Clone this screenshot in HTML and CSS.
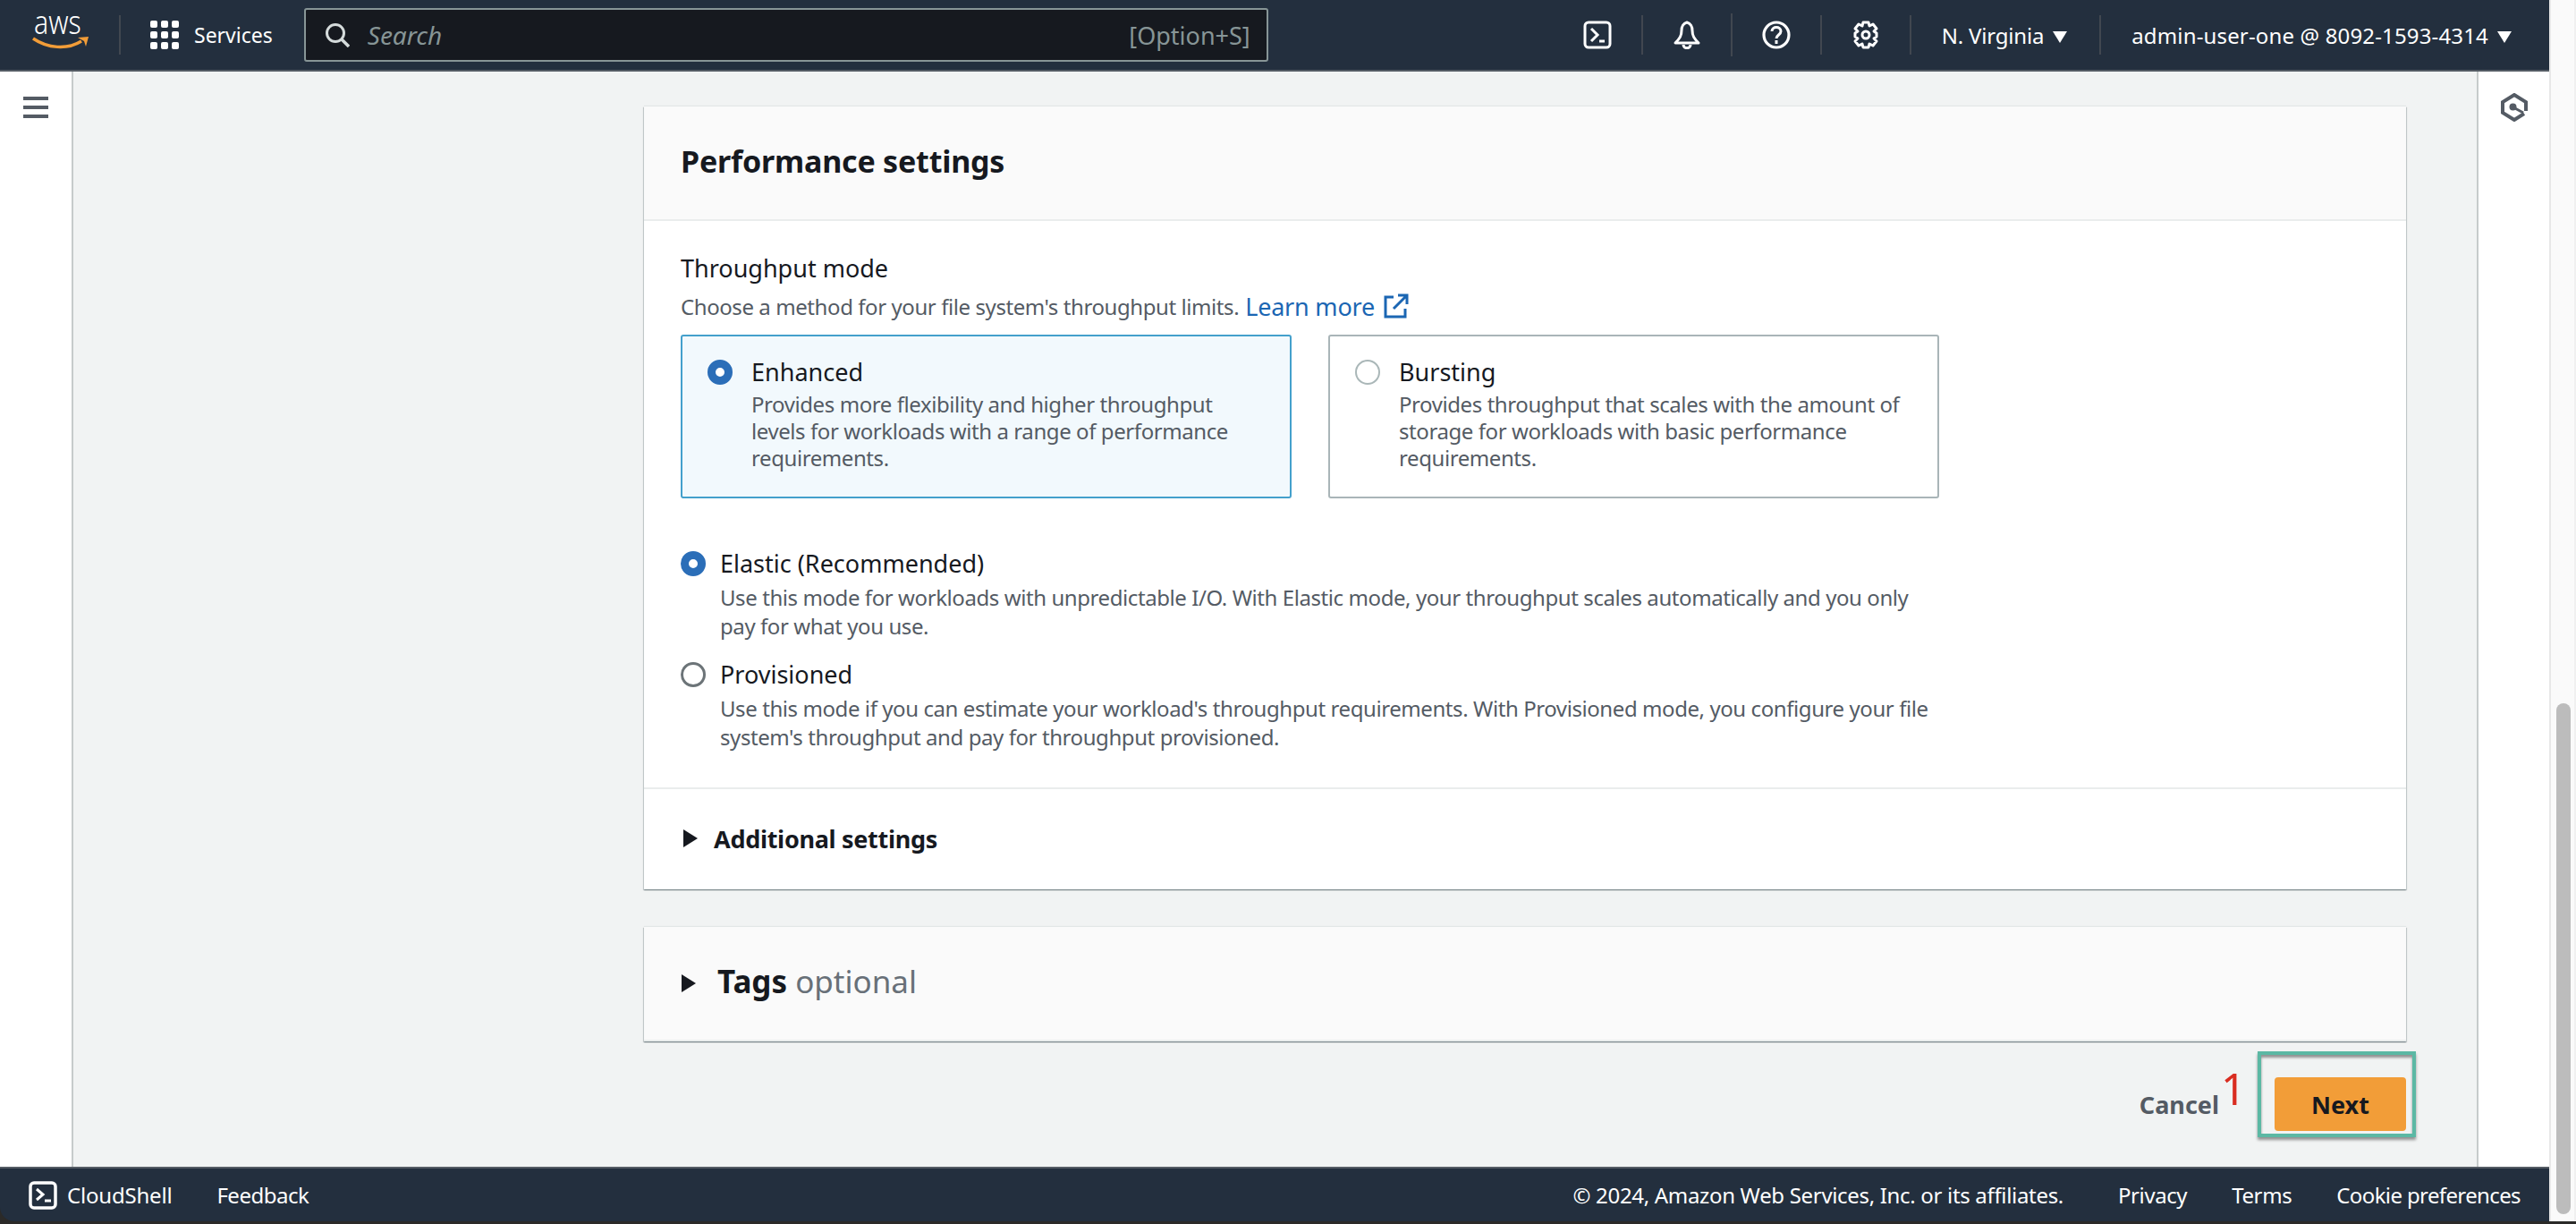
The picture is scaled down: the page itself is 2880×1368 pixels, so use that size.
FILE: index.html
```html
<!DOCTYPE html>
<html>
<head>
	<meta charset="utf-8">
	<title>Create file system</title>
	<link rel="stylesheet" href="styles.css">
</head>
<body>
	<div class="window">
		<header class="topbar">
			<div class="logo">
				<span class="logo-text">aws</span>
				<svg class="logo-smile" viewBox="0 0 64 16" role="presentation">
					<path d="M1 2c16 11 38 13 54 3" fill="none" stroke="#f29d38" stroke-width="3.5"/>
					<path d="M51 1l12-1-3 11-2-6z" fill="#f29d38"/>
				</svg>
			</div>
			<span class="bar-line logo-line"></span>
			<svg class="grid-icon" viewBox="0 0 32 32" role="presentation">
				<rect x="0" width="8" height="8" rx="2"/><rect x="12" width="8" height="8" rx="2"/><rect x="24" width="8" height="8" rx="2"/>
				<rect x="0" y="12" width="8" height="8" rx="2"/><rect x="12" y="12" width="8" height="8" rx="2"/><rect x="24" y="12" width="8" height="8" rx="2"/>
				<rect x="0" y="24" width="8" height="8" rx="2"/><rect x="12" y="24" width="8" height="8" rx="2"/><rect x="24" y="24" width="8" height="8" rx="2"/>
			</svg>
			<span class="services">Services</span>
			<div class="search">
				<svg class="search-icon" viewBox="0 0 28 28" role="presentation">
					<circle cx="12" cy="12" r="9.5" fill="none" stroke="#d5dbdb" stroke-width="3"/>
					<path d="M19 19l8 8" stroke="#d5dbdb" stroke-width="3.5"/>
				</svg>
				<em class="search-text">Search</em>
				<span class="search-key">[Option+S]</span>
			</div>
			<div class="bar-right">
				<svg class="bar-icon" viewBox="0 0 32 32" role="presentation">
					<rect x="2" y="2" width="28" height="28" rx="4" fill="none" stroke="#fff" stroke-width="3"/>
					<path d="M9 9l7 7-7 7" fill="none" stroke="#fff" stroke-width="3"/>
					<path d="M18 23h6" stroke="#fff" stroke-width="3"/>
				</svg>
				<span class="bar-line"></span>
				<svg class="bar-icon" viewBox="0 0 32 32" role="presentation">
					<path d="M16 2c-4 1-6 5-6 9 0 6-2 9-7 14h26c-5-5-7-8-7-14 0-4-2-8-6-9z" fill="none" stroke="#fff" stroke-width="3" stroke-linejoin="round"/>
					<path d="M12 27c0 5 8 5 8 0" fill="none" stroke="#fff" stroke-width="3"/>
				</svg>
				<span class="bar-line bar-line-tall"></span>
				<svg class="bar-icon" viewBox="0 0 32 32" role="presentation">
					<circle cx="16" cy="16" r="14" fill="none" stroke="#fff" stroke-width="3.2"/>
					<path d="M11 12c0-6 10-6 10 0 0 4-5 4-5 8" fill="none" stroke="#fff" stroke-width="3"/>
					<path d="M16 22v4" stroke="#fff" stroke-width="3"/>
				</svg>
				<span class="bar-line"></span>
				<svg class="bar-icon" viewBox="0 0 32 32" role="presentation">
					<path d="M13 2h6l1 4 4-2 4 5-3 3 3 2v4l-3 2 3 3-4 5-4-2-1 4h-6l-1-4-4 2-4-5 3-3-3-2v-4l3-2-3-3 4-5 4 2z" fill="none" stroke="#fff" stroke-width="3" stroke-linejoin="round"/>
					<circle cx="16" cy="16" r="4" fill="none" stroke="#fff" stroke-width="3"/>
				</svg>
				<span class="bar-line"></span>
				<span class="bar-menu region">N. Virginia <i class="caret"></i></span>
				<span class="bar-line"></span>
				<span class="bar-menu account">admin-user-one @ 8092-1593-4314 <i class="caret"></i></span>
			</div>
		</header>

		<div class="middle">
			<nav class="side-left">
				<div class="burger"><span></span><span></span><span></span></div>
			</nav>
			<main class="content">
				<section class="card">
					<div class="card-head"><h2>Performance settings</h2></div>
					<div class="card-body">
						<div class="field-label">Throughput mode</div>
						<div class="field-hint">
							<span>Choose a method for your file system's throughput limits.</span>
							<a class="learn" href="#">Learn more</a>
							<svg class="ext-icon" viewBox="0 0 28 28" role="presentation">
								<path d="M11 4H2v22h22v-9" fill="none" stroke="#1b66b3" stroke-width="3"/>
								<path d="M16 2h10v10M26 2L11 17" fill="none" stroke="#1b66b3" stroke-width="3"/>
							</svg>
						</div>
						<div class="tiles">
							<div class="tile tile-on">
								<span class="radio radio-on"></span>
								<div>
									<div class="opt-title">Enhanced</div>
									<div class="opt-desc">Provides more flexibility and higher throughput levels for workloads with a range of performance requirements.</div>
								</div>
							</div>
							<div class="tile">
								<span class="radio radio-pale"></span>
								<div>
									<div class="opt-title">Bursting</div>
									<div class="opt-desc">Provides throughput that scales with the amount of storage for workloads with basic performance requirements.</div>
								</div>
							</div>
						</div>
						<div class="opt">
							<span class="radio radio-on"></span>
							<div>
								<div class="opt-title">Elastic (Recommended)</div>
								<div class="opt-desc">Use this mode for workloads with unpredictable I/O. With Elastic mode, your throughput scales automatically and you only pay for what you use.</div>
							</div>
						</div>
						<div class="opt opt-second">
							<span class="radio"></span>
							<div>
								<div class="opt-title">Provisioned</div>
								<div class="opt-desc">Use this mode if you can estimate your workload's throughput requirements. With Provisioned mode, you configure your file system's throughput and pay for throughput provisioned.</div>
							</div>
						</div>
					</div>
					<div class="card-foot"><i class="arrow"></i><strong>Additional settings</strong></div>
				</section>

				<section class="card tags">
					<i class="arrow"></i>
					<h2>Tags <span>optional</span></h2>
				</section>

				<div class="actions">
					<span class="cancel">Cancel</span>
					<button class="next">Next</button>
					<!-- annotation drawn over the screenshot -->
					<span class="mark-num">1</span>
					<span class="mark-box"></span>
				</div>
			</main>
			<aside class="side-right">
				<svg class="hex-icon" viewBox="0 0 30 32" role="presentation">
					<path d="M28 20V10L15 2 2 10v12l13 8 11-7" fill="none" stroke="#545b64" stroke-width="4"/>
					<circle cx="13.5" cy="15.5" r="4" fill="#545b64"/>
					<path d="M14 16l11 6" stroke="#545b64" stroke-width="3"/>
				</svg>
			</aside>
		</div>

		<footer class="bottombar">
			<svg class="shell-icon" viewBox="0 0 32 32" role="presentation">
				<rect x="2" y="2" width="28" height="28" rx="4" fill="none" stroke="#fff" stroke-width="3.5"/>
				<path d="M9 9l7 6-7 6" fill="none" stroke="#fff" stroke-width="3"/>
				<path d="M18 22h7" stroke="#fff" stroke-width="3"/>
			</svg>
			<span class="shell-label">CloudShell</span>
			<span class="feedback">Feedback</span>
			<span class="copyright">© 2024, Amazon Web Services, Inc. or its affiliates.</span>
			<span class="foot-link privacy">Privacy</span>
			<span class="foot-link terms">Terms</span>
			<span class="foot-link cookies">Cookie preferences</span>
		</footer>
	</div>
	<div class="gutter"><div class="thumb"></div></div>
</body>
</html>
```

FILE: styles.css
```css
html, body {
	margin: 0;
	height: 100%;
}

body {
	display: flex;
	width: 2880px;
	height: 1368px;
	overflow: hidden;
	background: #2b2a28;
	font-family: "Noto Sans", sans-serif;
	color: #16191f;
}

.window {
	display: flex;
	flex-direction: column;
	width: 2850px;
	height: 1365px;
	border-bottom-left-radius: 16px;
	overflow: hidden;
}

.topbar {
	display: flex;
	align-items: center;
	flex: none;
	box-sizing: border-box;
	height: 80px;
	padding-left: 36px;
	background: #232f3e;
	border-bottom: 2px solid #545b64;
	color: #fff;
}

.logo {
	flex: none;
	width: 64px;
	padding-bottom: 16px;
}

.logo-text {
	display: block;
	margin-left: 2px;
	font-size: 36px;
	font-weight: 300;
	line-height: 40px;
	transform: scaleX(.84);
	transform-origin: left;
}

.logo-smile {
	display: block;
	width: 64px;
	height: 16px;
	margin-top: -4px;
}

.bar-line {
	flex: none;
	width: 2px;
	height: 44px;
	background: #414750;
}

.bar-line-tall {
	height: 48px;
}

.logo-line {
	margin-left: 33px;
}

.grid-icon {
	flex: none;
	width: 32px;
	height: 32px;
	margin-left: 33px;
	fill: #fff;
}

.services {
	margin-left: 17px;
	font-size: 23px;
}

.search {
	display: flex;
	flex: none;
	align-items: center;
	box-sizing: border-box;
	width: 1078px;
	height: 60px;
	margin-left: 35px;
	padding: 0 18px 0 21px;
	background: #16191f;
	border: 2px solid #879596;
	border-radius: 3px;
	color: #879596;
	font-size: 27px;
}

.search-icon {
	width: 28px;
	height: 28px;
}

.search-text {
	margin-left: 20px;
	font-size: 28px;
}

.search-key {
	margin-left: auto;
}

.bar-right {
	display: flex;
	align-items: center;
	margin-left: 319px;
	font-size: 24px;
}

.bar-icon {
	flex: none;
	width: 32px;
	height: 32px;
	margin: 0 33px;
}

.bar-menu {
	white-space: nowrap;
}

.region {
	margin: 0 36px 0 34px;
	letter-spacing: -.2px;
}

.account {
	margin-left: 34px;
	letter-spacing: .15px;
}

.caret {
	display: inline-block;
	width: 0;
	height: 0;
	margin-left: 4px;
	border-left: 8px solid transparent;
	border-right: 8px solid transparent;
	border-top: 13px solid #fff;
	vertical-align: 1px;
}

.middle {
	display: flex;
	flex: 1;
	min-height: 0;
	background: #f1f3f3;
}

.side-left {
	flex: none;
	box-sizing: border-box;
	width: 82px;
	padding: 28px 0 0 26px;
	background: #fff;
	border-right: 2px solid #c6cbcb;
}

.burger {
	display: flex;
	flex-direction: column;
	gap: 6px;
	width: 28px;
}

.burger span {
	height: 4px;
	background: #545b64;
}

.content {
	flex: 1;
	box-sizing: border-box;
	padding: 39px 0 0 638px;
	min-width: 0;
}

.card {
	box-sizing: border-box;
	width: 1970px;
	background: #fff;
	box-shadow: 0 1px 1px 0 rgba(0, 28, 36, .3), 1px 1px 1px 0 rgba(0, 28, 36, .15), -1px 1px 1px 0 rgba(0, 28, 36, .15), 0 -1px 1px 0 rgba(0, 28, 36, .06);
}

.card-head {
	box-sizing: border-box;
	height: 128px;
	padding: 37px 41px 0;
	background: #fafafa;
	border-bottom: 2px solid #eaeded;
}

.card-head h2 {
	margin: 0;
	font-size: 34px;
	font-weight: 700;
	line-height: 48px;
	letter-spacing: -.2px;
}

.card-body {
	box-sizing: border-box;
	height: 635px;
	padding: 33px 41px 0;
	border-bottom: 2px solid #eaeded;
}

.field-label {
	font-size: 27px;
	line-height: 40px;
}

.field-hint {
	display: flex;
	align-items: center;
	height: 44px;
	color: #545b64;
	font-size: 24px;
	letter-spacing: -.42px;
}

.learn {
	margin-left: 7px;
	color: #1b66b3;
	font-size: 27px;
	letter-spacing: -.2px;
	text-decoration: none;
}

.ext-icon {
	width: 28px;
	height: 28px;
	margin-left: 10px;
}

.tiles {
	display: flex;
	gap: 41px;
	margin-top: 10px;
}

.tile {
	display: flex;
	gap: 21px;
	box-sizing: border-box;
	width: 683px;
	height: 183px;
	padding: 25px 28px;
	border: 2px solid #a9b5b8;
	border-radius: 3px;
}

.tile-on {
	background: #f2f9fd;
	border-color: #44a0cc;
}

.radio {
	flex: none;
	box-sizing: border-box;
	width: 28px;
	height: 28px;
	margin-top: 1px;
	background: #fff;
	border: 3px solid #6c7478;
	border-radius: 50%;
}

.radio-on {
	border: 9px solid #2b6eb8;
}

.radio-pale {
	border: 2px solid #aab7b8;
}

.opt-title {
	font-size: 27px;
	line-height: 30px;
}

.opt-desc {
	margin-top: 6px;
	color: #545b64;
	font-size: 24px;
	line-height: 30px;
	letter-spacing: -.42px;
}

.opt {
	display: flex;
	gap: 16px;
	width: 1410px;
	margin-top: 58px;
}

.opt .opt-desc {
	margin-top: 7px;
	line-height: 32px;
}

.opt-second {
	margin-top: 23px;
}

.card-foot {
	display: flex;
	align-items: center;
	height: 112px;
	padding: 0 0 2px 44px;
	box-sizing: border-box;
	font-size: 27px;
	letter-spacing: -.3px;
}

.arrow {
	flex: none;
	width: 0;
	height: 0;
	margin-right: 18px;
	border-top: 10px solid transparent;
	border-bottom: 10px solid transparent;
	border-left: 16px solid #16191f;
}

.tags {
	display: flex;
	align-items: center;
	height: 128px;
	margin-top: 42px;
	padding-left: 42px;
	background: #fafafa;
	border-bottom: 2px solid #eaeded;
}

.tags .arrow {
	margin-right: 24px;
}

.tags h2 {
	margin: 0 0 5px;
	font-size: 35px;
	font-weight: 700;
}

.tags h2 span {
	color: #687078;
	font-weight: 400;
}

.actions {
	position: relative;
	display: flex;
	align-items: center;
	justify-content: flex-end;
	gap: 62px;
	width: 1970px;
	height: 60px;
	margin-top: 40px;
}

.cancel {
	color: #545b64;
	font-size: 27px;
	font-weight: 700;
}

.next {
	box-sizing: border-box;
	width: 147px;
	height: 60px;
	padding: 0;
	background: #f29d38;
	border: 0;
	border-radius: 4px;
	color: #16191f;
	font: 700 27px "Noto Sans", sans-serif;
}

.mark-num {
	position: absolute;
	right: 179px;
	top: -18px;
	color: #d92c20;
	font-size: 49px;
	line-height: 60px;
}

.mark-box {
	position: absolute;
	right: -11px;
	top: -29px;
	box-sizing: border-box;
	width: 177px;
	height: 96px;
	border: 4px solid #5bb8a4;
	box-shadow: 0 3px 3px rgba(0, 0, 0, .4), inset 0 3px 3px rgba(0, 0, 0, .4);
}

.side-right {
	flex: none;
	box-sizing: border-box;
	width: 81px;
	padding: 24px 0 0 25px;
	background: #fff;
	border-left: 2px solid #c6cbcb;
}

.hex-icon {
	display: block;
	width: 30px;
	height: 32px;
}

.bottombar {
	display: flex;
	align-items: center;
	flex: none;
	box-sizing: border-box;
	height: 61px;
	padding-left: 32px;
	background: #232f3e;
	border-top: 2px solid #545b64;
	color: #fff;
	font-size: 24px;
}

.shell-icon {
	width: 32px;
	height: 32px;
}

.shell-label {
	margin-left: 11px;
	letter-spacing: -.2px;
}

.feedback {
	margin-left: 50px;
	letter-spacing: -.5px;
}

.copyright {
	margin-left: auto;
	letter-spacing: -.32px;
}

.foot-link {
	margin-left: 61px;
	letter-spacing: -.4px;
}

.foot-link.terms,
.foot-link.cookies {
	margin-left: 50px;
}

.foot-link.cookies {
	margin-right: 32px;
	letter-spacing: -.62px;
}

.gutter {
	flex: none;
	box-sizing: border-box;
	width: 30px;
	height: 1365px;
	padding: 786px 4px 8px 6px;
	background: #fafafa;
	border-left: 2px solid #e8e8e8;
	border-right: 2px solid #f0f0f0;
}

.thumb {
	height: 100%;
	background: #bcbcbc;
	border-radius: 8px;
}
```
